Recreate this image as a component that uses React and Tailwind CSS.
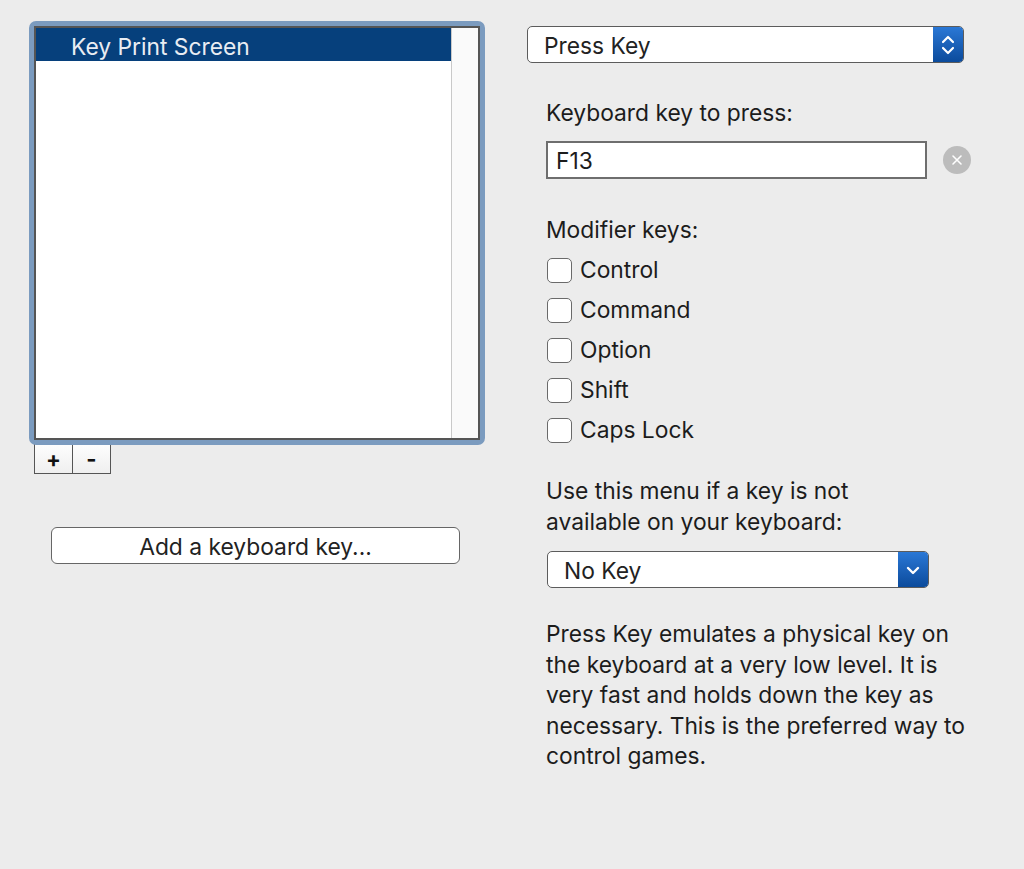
import React from 'react'

const font = { fontFamily: 'Inter, "Liberation Sans", sans-serif' }

function Checkbox({ label }) {
    return (
        <div className="flex items-center h-[40px] gap-[8px]">
            <div className="w-[25px] h-[25px] rounded-[5px] border-[1.5px] border-[#6a6a6a] bg-white" />
            <span className="text-[22.8px] text-[#1c1c1c]">{label}</span>
        </div>
    )
}

function Select({ label, width, double }) {
    return (
        <div
            className="flex h-[37px] rounded-[5px] border border-[#5c5c5c] bg-white overflow-hidden"
            style={{ width }}
        >
            <div className="flex-1 flex items-center pl-[16px] pt-[3px] text-[22.8px] text-[#222]">
                {label}
            </div>
            <div className="w-[30px] flex items-center justify-center bg-gradient-to-b from-[#2a78d6] to-[#0b4b9c]">
                {double ? (
                    <svg width="14" height="24" viewBox="0 0 14 24" fill="none" stroke="white" strokeWidth="2.2" strokeLinecap="round" strokeLinejoin="round">
                        <path d="M2 9 L7 4 L12 9" />
                        <path d="M2 15 L7 20 L12 15" />
                    </svg>
                ) : (
                    <svg width="14" height="10" viewBox="0 0 14 10" fill="none" stroke="white" strokeWidth="2.4" strokeLinecap="round" strokeLinejoin="round">
                        <path d="M2 3 L7 8 L12 3" />
                    </svg>
                )}
            </div>
        </div>
    )
}

export default function App() {
    return (
        <div className="w-[1024px] h-[869px] bg-[#ececec] flex pt-[21px] pl-[29px]" style={font}>
            {/* left column */}
            <div className="w-[456px] flex flex-col">
                <div className="relative z-10 h-[424px] border-[5px] border-[#7b9bbf] rounded-[7px]">
                    <div className="h-full border-2 border-[#555] flex bg-white">
                        <div className="flex-1">
                            <div className="h-[33px] bg-[#06407c] flex items-center pl-[35px] pt-[5px] text-[22.8px] text-[#e9edf3]">
                                Key Print Screen
                            </div>
                        </div>
                        <div className="w-[27px] bg-[#fafafa] border-l border-[#c9c9c9]" />
                    </div>
                </div>
                <div className="flex ml-[5px] -mt-[5px]">
                    <button className="w-[39px] h-[34px] border border-[#555] bg-gradient-to-b from-white to-[#efefef] text-[22px] font-bold leading-none text-[#111] pt-[4px]">
                        +
                    </button>
                    <button className="w-[38px] h-[34px] border border-l-0 border-[#555] bg-gradient-to-b from-white to-[#efefef] text-[22px] font-bold leading-none text-[#111] pt-[4px]">
                        -
                    </button>
                </div>
                <button className="ml-[22px] mt-[53px] w-[409px] h-[37px] rounded-[6px] border-[1.5px] border-[#666] bg-white text-[22.8px] text-[#222] pt-[2px]">
                    Add a keyboard key...
                </button>
            </div>

            {/* right column */}
            <div className="ml-[42px] w-[445px] flex flex-col">
                <div className="mt-[5px]">
                    <Select label="Press Key" width={437} double />
                </div>

                <div className="pl-[19px]">
                    <p className="mt-[35px] leading-[30px] text-[22.8px] text-[#1c1c1c]">
                        Keyboard key to press:
                    </p>
                    <div className="mt-[13px] flex items-center">
                        <div className="w-[381px] h-[38px] border-2 border-[#6e6e6e] bg-white flex items-center pl-[8px] pt-[3px] text-[22.8px] text-[#1c1c1c]">
                            F13
                        </div>
                        <div className="ml-[16px] w-[28px] h-[28px] rounded-full bg-[#bcbcbc] flex items-center justify-center">
                            <svg width="12" height="12" viewBox="0 0 12 12" stroke="white" strokeWidth="1.6" strokeLinecap="round">
                                <path d="M2 2 L10 10 M10 2 L2 10" />
                            </svg>
                        </div>
                    </div>

                    <p className="mt-[36px] leading-[30px] text-[22.8px] text-[#1c1c1c]">
                        Modifier keys:
                    </p>
                    <div className="mt-[5px] pl-[1px]">
                        <Checkbox label="Control" />
                        <Checkbox label="Command" />
                        <Checkbox label="Option" />
                        <Checkbox label="Shift" />
                        <Checkbox label="Caps Lock" />
                    </div>

                    <p className="mt-[25px] leading-[31px] text-[22.8px] text-[#1c1c1c]">
                        Use this menu if a key is not
                        <br />
                        available on your keyboard:
                    </p>
                    <div className="mt-[14px] pl-[1px]">
                        <Select label="No Key" width={382} />
                    </div>

                    <p className="mt-[31px] w-[440px] leading-[30.5px] text-[22.8px] text-[#1c1c1c]">
                        Press Key emulates a physical key on
                        <br />
                        the keyboard at a very low level. It is
                        <br />
                        very fast and holds down the key as
                        <br />
                        necessary. This is the preferred way to
                        <br />
                        control games.
                    </p>
                </div>
            </div>
        </div>
    )
}
